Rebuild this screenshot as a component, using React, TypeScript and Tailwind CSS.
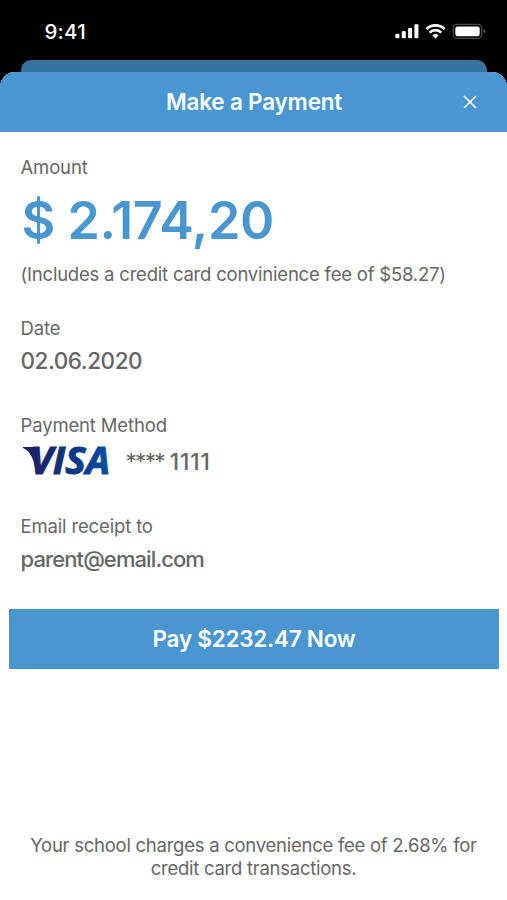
import type { ReactNode } from 'react'

type FieldProps = {
  label: string
  className?: string
  children: ReactNode
}

function StatusIcons() {
  return (
    <svg width="92" height="18" viewBox="0 0 92 18" fill="none" aria-hidden="true">
      <g fill="#fff">
        <rect x="0.4" y="10.7" width="4" height="4.6" rx="1" />
        <rect x="6.8" y="8" width="4" height="7.3" rx="1" />
        <rect x="13.1" y="4.9" width="4" height="10.4" rx="1" />
        <rect x="19.4" y="1.3" width="4" height="14" rx="1" />
      </g>
      <g stroke="#fff" strokeWidth="2.7">
        <path d="M31.4 6.1a13 13 0 0 1 18.2 0" />
        <path d="M34.7 9.6a8.2 8.2 0 0 1 11.6 0" />
      </g>
      <path d="M37.4 12.3a4.4 4.4 0 0 1 6.2 0l-3.1 3.2z" fill="#fff" />
      <rect x="58.2" y="1.3" width="28.6" height="14" rx="4" stroke="#4c4c4c" strokeWidth="1.2" />
      <rect x="60.3" y="3.4" width="24.4" height="9.8" rx="2.2" fill="#fff" />
      <path d="M88.5 5.9c1.3.4 2 1.3 2 2.4s-.7 2-2 2.4z" fill="#4c4c4c" />
    </svg>
  )
}

function VisaLogo() {
  return (
    <svg width="96" height="60" viewBox="0 -14 96 60" className="-my-[14px] -mr-2" aria-label="Visa">
      <defs>
        <linearGradient id="visa" gradientUnits="userSpaceOnUse" x1="2" y1="20" x2="86" y2="10">
          <stop offset="0" stopColor="#241c64" />
          <stop offset="0.45" stopColor="#10307a" />
          <stop offset="1" stopColor="#024fa2" />
        </linearGradient>
      </defs>
      <path d="M2 3h11c1.800 0 3 .8 3.300 2.600l2.200 14.400-4 8C13.500 16 9.500 6.800 2 3.900z" fill="url(#visa)" />
      <text
        x="9"
        y="30"
        textLength="80"
        lengthAdjust="spacingAndGlyphs"
        fill="url(#visa)"
        stroke="url(#visa)"
        strokeWidth="1"
        className="font-['Open_Sans',sans-serif] text-[37px] font-bold italic"
      >
        VISA
      </text>
    </svg>
  )
}

function Field({ label, className = '', children }: FieldProps) {
  return (
    <section className={className}>
      <h2 className="text-[18.5px] leading-6 tracking-[-0.15px]">{label}</h2>
      {children}
    </section>
  )
}

export default function App() {
  return (
    <main className="flex h-[900px] w-[507px] flex-col overflow-hidden bg-black font-[Inter,sans-serif] text-[#666]">
      <div className="flex h-[60px] items-start justify-between pt-[21px] pr-5 pl-[44.5px] text-white">
        <span className="text-[20.5px] leading-[22px] font-medium tracking-[0.2px]">9:41</span>
        <div className="pt-[2px]">
          <StatusIcons />
        </div>
      </div>

      {/* edge of the card stacked behind the sheet */}
      <div className="mr-[20px] ml-[21px] h-3 shrink-0 rounded-t-[10px] bg-[#3974a0]" />

      <div className="flex flex-1 flex-col overflow-hidden rounded-t-[15px] bg-white">
        <header className="grid h-[59.5px] shrink-0 grid-cols-[1fr_auto_1fr] items-center bg-[#4996d0] text-white">
          <h1 className="col-start-2 pl-px text-[22.5px] leading-7 font-[560] tracking-[-0.2px]">Make a Payment</h1>
          <button type="button" aria-label="Close" className="mr-[30px] justify-self-end">
            <svg width="14" height="14" viewBox="0 0 14 14" stroke="currentColor" strokeWidth="1.6">
              <path d="M1 1l12 12M13 1L1 13" />
            </svg>
          </button>
        </header>

        <div className="flex flex-col px-[20.5px] pt-[23.5px]">
          <Field label="Amount">
            <p className="mt-[10px] pl-[1px] text-[52px] leading-[64px] font-semibold tracking-[-0.4px] text-[#4996d0]">
              $ 2.174,20
            </p>
            <p className="mt-[9px] text-[18.5px] leading-6 tracking-[-0.21px]">
              (Includes a credit card convinience fee of $58.27)
            </p>
          </Field>

          <Field label="Date" className="mt-[30px]">
            <p className="mt-[7px] text-[22.5px] leading-7 font-[460] tracking-[-0.45px]">02.06.2020</p>
          </Field>

          <Field label="Payment Method" className="mt-[38px]">
            <div className="mt-[7px] flex h-8 items-center">
              <VisaLogo />
              <p className="ml-[17px] flex gap-[6px] pt-[3px] text-[22.5px] leading-7">
                <span className="tracking-[-1.7px]">****</span>
                <span className="font-[460] tracking-[0.9px]">1111</span>
              </p>
            </div>
          </Field>

          <Field label="Email receipt to" className="mt-[38px]">
            <p className="mt-[7px] text-[22px] leading-7 font-[460] tracking-[-0.9px]">parent@email.com</p>
          </Field>
        </div>

        <button
          type="button"
          className="mr-[8px] ml-[9px] mt-[36px] h-[59.5px] shrink-0 bg-[#4996d0] pt-px text-[22.5px] font-[560] tracking-[-0.25px] text-white"
        >
          Pay $2232.47 Now
        </button>

        <p className="mt-auto mb-5 px-5 text-center text-[18.5px] leading-[23px] tracking-[-0.26px]">
          Your school charges a convenience fee of 2.68% for credit card transactions.
        </p>
      </div>
    </main>
  )
}
